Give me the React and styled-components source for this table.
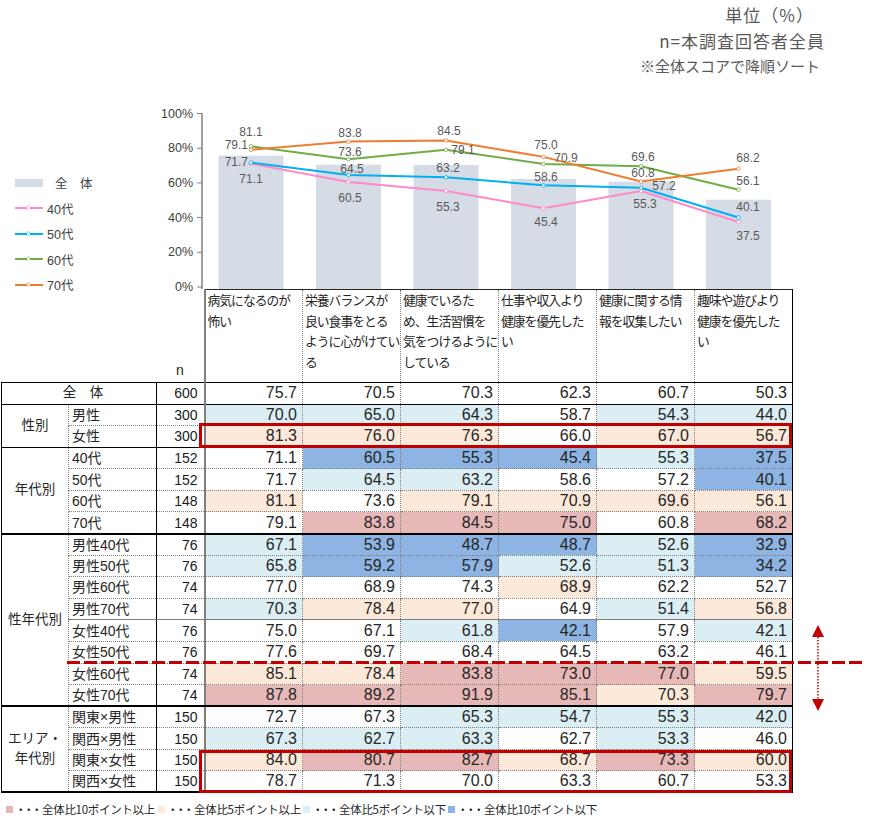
import React from "react";
import styled, { createGlobalStyle } from "styled-components";

const GlobalStyle = createGlobalStyle`
  html, body { margin: 0; padding: 0; background: #fff; }
  body { font-family: "Liberation Sans", "Noto Sans CJK JP", sans-serif; color: #262626; }
`;

const COLORS = { red: "#e6b8b7", peach: "#fde9d9", lb: "#daeef3", blue: "#8db4e2" };
const overall = [75.7, 70.5, 70.3, 62.3, 60.7, 50.3];
const tone = (v, i) => {
  const d = Math.round((v - overall[i]) * 10) / 10;
  if (d >= 10) return COLORS.red;
  if (d >= 5) return COLORS.peach;
  if (d <= -10) return COLORS.blue;
  if (d <= -5) return COLORS.lb;
  return "transparent";
};
const EDGES = {
  dotted: "1px dotted #7f7f7f",
  black: "1px solid #000",
  thick: "2px solid #000",
  gray: "1px solid #7f7f7f",
};

const questions = [
  ["病気になるのが", "怖い"],
  ["栄養バランスが", "良い食事をとる", "ように心がけてい", "る"],
  ["健康でいるた", "め、生活習慣を", "気をつけるように", "している"],
  ["仕事や収入より", "健康を優先した", "い"],
  ["健康に関する情", "報を収集したい"],
  ["趣味や遊びより", "健康を優先した", "い"],
];

const rows = [
  { total: true, n: 600, v: overall, bb: "black" },
  { group: "性別", span: 2, gbb: "black", sub: "男性", n: 300, v: [70.0, 65.0, 64.3, 58.7, 54.3, 44.0], bb: "dotted" },
  { sub: "女性", n: 300, v: [81.3, 76.0, 76.3, 66.0, 67.0, 56.7], bb: "black" },
  { group: "年代別", span: 4, gbb: "thick", sub: "40代", n: 152, v: [71.1, 60.5, 55.3, 45.4, 55.3, 37.5], bb: "dotted" },
  { sub: "50代", n: 152, v: [71.7, 64.5, 63.2, 58.6, 57.2, 40.1], bb: "dotted" },
  { sub: "60代", n: 148, v: [81.1, 73.6, 79.1, 70.9, 69.6, 56.1], bb: "dotted" },
  { sub: "70代", n: 148, v: [79.1, 83.8, 84.5, 75.0, 60.8, 68.2], bb: "thick" },
  { group: "性年代別", span: 8, gbb: "thick", sub: "男性40代", n: 76, v: [67.1, 53.9, 48.7, 48.7, 52.6, 32.9], bb: "dotted" },
  { sub: "男性50代", n: 76, v: [65.8, 59.2, 57.9, 52.6, 51.3, 34.2], bb: "dotted" },
  { sub: "男性60代", n: 74, v: [77.0, 68.9, 74.3, 68.9, 62.2, 52.7], bb: "dotted" },
  { sub: "男性70代", n: 74, v: [70.3, 78.4, 77.0, 64.9, 51.4, 56.8], bb: "gray" },
  { sub: "女性40代", n: 76, v: [75.0, 67.1, 61.8, 42.1, 57.9, 42.1], bb: "dotted" },
  { sub: "女性50代", n: 76, v: [77.6, 69.7, 68.4, 64.5, 63.2, 46.1], bb: "dotted" },
  { sub: "女性60代", n: 74, v: [85.1, 78.4, 83.8, 73.0, 77.0, 59.5], bb: "dotted" },
  { sub: "女性70代", n: 74, v: [87.8, 89.2, 91.9, 85.1, 70.3, 79.7], bb: "thick" },
  { group: "エリア・\n年代別", span: 4, gbb: "thick", sub: "関東×男性", n: 150, v: [72.7, 67.3, 65.3, 54.7, 55.3, 42.0], bb: "dotted" },
  { sub: "関西×男性", n: 150, v: [67.3, 62.7, 63.3, 62.7, 53.3, 46.0], bb: "dotted" },
  { sub: "関東×女性", n: 150, v: [84.0, 80.7, 82.7, 68.7, 73.3, 60.0], bb: "dotted" },
  { sub: "関西×女性", n: 150, v: [78.7, 71.3, 70.0, 63.3, 60.7, 53.3], bb: "thick" },
];

const series = [
  { name: "40代", color: "#ff8ac9", v: [71.1, 60.5, 55.3, 45.4, 55.3, 37.5] },
  { name: "50代", color: "#00b0f0", v: [71.7, 64.5, 63.2, 58.6, 57.2, 40.1] },
  { name: "60代", color: "#70ad47", v: [81.1, 73.6, 79.1, 70.9, 69.6, 56.1] },
  { name: "70代", color: "#ed7d31", v: [79.1, 83.8, 84.5, 75.0, 60.8, 68.2] },
];

const labels = [
  ["81.1", 251, 132, "middle"], ["79.1", 248, 145, "end"], ["71.7", 248, 162, "end"], ["71.1", 251, 179, "middle"],
  ["83.8", 350, 133, "middle"], ["73.6", 350, 152, "middle"], ["64.5", 352, 169, "middle"], ["60.5", 350, 198, "middle"],
  ["84.5", 449, 131, "middle"], ["79.1", 463, 150, "middle"], ["63.2", 448, 168, "middle"], ["55.3", 448, 207, "middle"],
  ["75.0", 546, 145, "middle"], ["70.9", 566, 158, "middle"], ["58.6", 546, 177, "middle"], ["45.4", 546, 222, "middle"],
  ["69.6", 643, 157, "middle"], ["60.8", 643, 173, "middle"], ["57.2", 664, 186, "middle"], ["55.3", 645, 204, "middle"],
  ["68.2", 748, 158, "middle"], ["56.1", 748, 181, "middle"], ["40.1", 748, 207, "middle"], ["37.5", 748, 236, "middle"],
];

const keys = [
  { c: COLORS.red, t: "全体比10ポイント以上", w: 152 },
  { c: COLORS.peach, t: "全体比5ポイント以上", w: 145 },
  { c: COLORS.lb, t: "全体比5ポイント以下", w: 145 },
  { c: COLORS.blue, t: "全体比10ポイント以下", w: 150 },
];

const X0 = 251;
const DX = 97.5;
const xOf = (i) => X0 + DX * i;
const yOf = (v) => 287 - v * 1.735;

const Page = styled.div`
  position: relative;
  width: 872px;
  height: 824px;
  overflow: hidden;
`;

const Notes = styled.div`
  height: 95px;
  box-sizing: border-box;
  padding-top: 2px;
  display: flex;
  flex-direction: column;
  align-items: flex-end;
`;

const Note = styled.div`
  font-family: "Noto Sans CJK JP", sans-serif;
  font-size: ${(p) => p.$size}px;
  letter-spacing: ${(p) => p.$ls || 0}px;
  line-height: 25.5px;
  margin-right: ${(p) => p.$mr}px;
  color: #595959;
  white-space: nowrap;
`;

const ChartRow = styled.div`
  display: flex;
  height: 194px;
`;

const ChartLegend = styled.div`
  width: 150px;
  flex: none;
  box-sizing: border-box;
  padding: 75px 0 0 15px;
  display: flex;
  flex-direction: column;
`;

const LegendItem = styled.div`
  height: 25.5px;
  flex: none;
  display: flex;
  align-items: center;
  gap: ${(p) => p.$gap}px;
  font-size: 12.5px;
  color: #404040;
  white-space: nowrap;
`;

const BarSwatch = styled.span`
  width: 28px;
  height: 8px;
  background: #d6dce5;
`;

const LineSwatch = styled.span`
  position: relative;
  width: 28px;
  height: 2px;
  background: ${(p) => p.$c};
  &::after {
    content: "";
    position: absolute;
    left: 12px;
    top: -1px;
    width: 3px;
    height: 3px;
    border-radius: 50%;
    background: #fff;
    box-shadow: 0 0 0 0.5px ${(p) => p.$c};
  }
`;

const ChartSvg = styled.svg`
  display: block;
  flex: none;
  overflow: visible;
  font-family: "Liberation Sans", "Noto Sans CJK JP", sans-serif;
`;

const TableWrap = styled.div`
  position: relative;
  width: 872px;
`;

const Table = styled.table`
  border-collapse: collapse;
  table-layout: fixed;
  width: 791px;
  margin-left: 1px;
  color: #262626;
`;

const HeadRow = styled.tr`
  height: 93px;
`;

const HeadBlank = styled.td`
  border: none;
  border-bottom: 1px solid #000;
  padding: 0;
`;

const HeadN = styled(HeadBlank)`
  vertical-align: bottom;
  text-align: center;
  font-size: 14px;
  line-height: 18px;
  padding-bottom: 3px;
`;

const HeadQ = styled.td`
  vertical-align: top;
  border-top: 1px solid #262626;
  border-bottom: 1px solid #000;
  border-left: ${(p) => (p.$first ? "2px solid #7f7f7f" : "1px dotted #7f7f7f")};
  border-right: ${(p) => (p.$last ? "1px solid #000" : "1px dotted #7f7f7f")};
  padding: 0 0 0 2px;
  font-family: "Noto Sans CJK JP", sans-serif;
  font-size: 12.8px;
  letter-spacing: -1px;
  line-height: 20.5px;
  white-space: nowrap;
  overflow: hidden;
`;

const BodyRow = styled.tr`
  height: 21.58px;
`;

const GroupCell = styled.td`
  border-left: 1px solid #000;
  border-right: 1px dotted #7f7f7f;
  border-bottom: ${(p) => EDGES[p.$bb]};
  padding: 0;
  text-align: center;
  vertical-align: middle;
  font-size: 13.5px;
  line-height: 20px;
  white-space: pre-line;
`;

const TotalCell = styled(GroupCell)`
  border-right: 1px solid #000;
  font-size: 13.5px;
  padding-left: 8px;
`;

const SubCell = styled.td`
  border-right: 1px solid #000;
  border-bottom: ${(p) => EDGES[p.$bb]};
  padding: 0 0 0 3px;
  font-size: 14px;
  line-height: 20px;
  text-align: left;
  white-space: nowrap;
  overflow: hidden;
`;

const NCell = styled.td`
  border-right: 2px solid #7f7f7f;
  border-bottom: ${(p) => EDGES[p.$bb]};
  padding: 0 6px 0 0;
  text-align: right;
  font-size: 14px;
  line-height: 20px;
  color: #1a1a1a;
`;

const DataCell = styled.td`
  background: ${(p) => p.$bg};
  border-right: ${(p) => (p.$last ? "1px solid #000" : "1px dotted #7f7f7f")};
  border-bottom: ${(p) => EDGES[p.$bb]};
  padding: 0 5px 0 0;
  text-align: right;
  font-size: 16px;
  line-height: 20px;
  white-space: nowrap;
`;

const RedBox = styled.div`
  position: absolute;
  left: 199px;
  width: 593px;
  top: ${(p) => p.$top}px;
  height: ${(p) => p.$h}px;
  box-sizing: border-box;
  border: 3px solid #c00000;
  pointer-events: none;
`;

const DashLine = styled.div`
  position: absolute;
  left: 67px;
  width: 798px;
  top: 372px;
  height: 3px;
  background: repeating-linear-gradient(to right, #c00000 0 13px, transparent 13px 17px);
  pointer-events: none;
`;

const ArrowSvg = styled.svg`
  position: absolute;
  left: 810px;
  top: 336px;
  overflow: visible;
`;

const BottomLegend = styled.div`
  display: flex;
  align-items: center;
  height: 20px;
  margin-top: 6px;
  padding-left: 6px;
`;

const KeyItem = styled.div`
  display: flex;
  align-items: center;
  width: ${(p) => p.$w}px;
  flex: none;
  font-family: "Noto Sans CJK JP", sans-serif;
  font-size: 11.5px;
  letter-spacing: -0.3px;
  color: #262626;
  white-space: nowrap;
`;

const KeyDots = styled.span`
  letter-spacing: -3.5px;
  margin-right: 3px;
`;

const KeySwatch = styled.span`
  width: 7px;
  height: 7px;
  background: ${(p) => p.$c};
  margin-right: 2px;
  flex: none;
`;

function Chart() {
  return (
    <ChartSvg width="722" height="194" viewBox="150 95 722 194">
      {overall.map((v, i) => (
        <rect key={i} x={xOf(i) - 32.5} y={yOf(v)} width="65" height={289 - yOf(v)} fill="#d6dce5" />
      ))}
      <line x1="202" y1="113" x2="202" y2="289" stroke="#7f7f7f" strokeWidth="1.5" />
      {[0, 20, 40, 60, 80, 100].map((t) => (
        <g key={t}>
          <line x1="197" x2="202" y1={yOf(t)} y2={yOf(t)} stroke="#7f7f7f" strokeWidth="1" />
          <text x="193" y={yOf(t)} textAnchor="end" dominantBaseline="central" fontSize="12.5" fill="#404040">
            {t}%
          </text>
        </g>
      ))}
      {series.map((s) => (
        <g key={s.name}>
          <polyline
            points={s.v.map((v, i) => `${xOf(i)},${yOf(v)}`).join(" ")}
            fill="none"
            stroke={s.color}
            strokeWidth="2"
            strokeLinejoin="round"
          />
          {s.v.map((v, i) => (
            <circle key={i} cx={xOf(i)} cy={yOf(v)} r="1.8" fill="#fff" stroke={s.color} strokeWidth="0.8" />
          ))}
        </g>
      ))}
      {labels.map(([t, x, y, a], i) => (
        <text key={i} x={x} y={y} textAnchor={a} dominantBaseline="central" fontSize="12" fill="#595959">
          {t}
        </text>
      ))}
    </ChartSvg>
  );
}

function DataTable() {
  return (
    <Table>
      <colgroup>
        <col style={{ width: 67 }} />
        <col style={{ width: 88 }} />
        <col style={{ width: 48 }} />
        {questions.map((_, i) => (
          <col key={i} style={{ width: 98 }} />
        ))}
      </colgroup>
      <tbody>
        <HeadRow>
          <HeadBlank />
          <HeadBlank />
          <HeadN>n</HeadN>
          {questions.map((q, i) => (
            <HeadQ key={i} $first={i === 0} $last={i === questions.length - 1}>
              {q.map((line, j) => (
                <div key={j}>{line}</div>
              ))}
            </HeadQ>
          ))}
        </HeadRow>
        {rows.map((r, ri) => (
          <BodyRow key={ri}>
            {r.total ? (
              <TotalCell colSpan={2} $bb={r.bb}>
                全　体
              </TotalCell>
            ) : null}
            {r.group ? (
              <GroupCell rowSpan={r.span} $bb={r.gbb}>
                {r.group}
              </GroupCell>
            ) : null}
            {r.sub ? <SubCell $bb={r.bb}>{r.sub}</SubCell> : null}
            <NCell $bb={r.bb}>{r.n}</NCell>
            {r.v.map((v, i) => (
              <DataCell key={i} $bb={r.bb} $bg={tone(v, i)} $last={i === 5}>
                {v.toFixed(1)}
              </DataCell>
            ))}
          </BodyRow>
        ))}
      </tbody>
    </Table>
  );
}

export default function App() {
  return (
    <Page>
      <GlobalStyle />
      <Notes>
        <Note $size={17} $ls={1} $mr={58}>単位（%）</Note>
        <Note $size={17} $ls={1} $mr={47}>n=本調査回答者全員</Note>
        <Note $size={15} $mr={52}>※全体スコアで降順ソート</Note>
      </Notes>
      <ChartRow>
        <ChartLegend>
          <LegendItem $gap={12}>
            <BarSwatch />
            <span>全　体</span>
          </LegendItem>
          {series.map((s) => (
            <LegendItem key={s.name} $gap={4}>
              <LineSwatch $c={s.color} />
              <span>{s.name}</span>
            </LegendItem>
          ))}
        </ChartLegend>
        <Chart />
      </ChartRow>
      <TableWrap>
        <DataTable />
        <RedBox $top={134} $h={25} />
        <RedBox $top={461} $h={43} />
        <DashLine />
        <ArrowSvg width="16" height="86" viewBox="0 0 16 86">
          <polygon points="8,0 2,12 14,12" fill="#c00000" />
          <line x1="8" y1="12" x2="8" y2="74" stroke="#c00000" strokeWidth="1.5" strokeDasharray="1.5 1.5" />
          <polygon points="2,74 14,74 8,86" fill="#c00000" />
        </ArrowSvg>
      </TableWrap>
      <BottomLegend>
        {keys.map((k) => (
          <KeyItem key={k.t} $w={k.w}>
            <KeySwatch $c={k.c} />
            <KeyDots>・・・</KeyDots>
            {k.t}
          </KeyItem>
        ))}
      </BottomLegend>
    </Page>
  );
}
